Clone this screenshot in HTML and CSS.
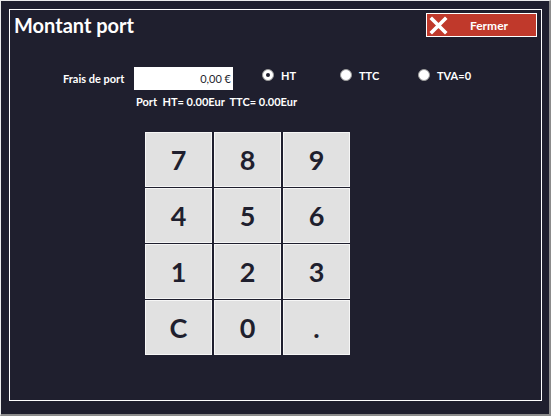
FILE: index.html
```html
<!DOCTYPE html>
<html lang="fr">
<head>
<meta charset="utf-8">
<title>Montant port</title>
<link rel="stylesheet" href="styles.css">
</head>
<body>
<div class="window">
  <div class="frame">
    <div class="header">
      <h1 class="title">Montant port</h1>
      <button class="close-btn" type="button">
        <svg class="close-icon" width="19" height="19" viewBox="0 0 19 19"><path d="M3 3 L16 16 M16 3 L3 16" stroke="#fff" stroke-width="3.6" stroke-linecap="square"/></svg>
        <span class="close-label">Fermer</span>
      </button>
    </div>
    <div class="form-row">
      <span class="label">Frais de port</span>
      <div class="input">0,00 €</div>
      <label class="radio"><span class="dot checked"></span>HT</label>
      <label class="radio"><span class="dot"></span>TTC</label>
      <label class="radio"><span class="dot"></span>TVA=0</label>
    </div>
    <div class="summary">Port&nbsp; HT= 0.00Eur&nbsp; TTC= 0.00Eur</div>
    <div class="keypad">
      <div class="key">7</div><div class="key">8</div><div class="key">9</div>
      <div class="key">4</div><div class="key">5</div><div class="key">6</div>
      <div class="key">1</div><div class="key">2</div><div class="key">3</div>
      <div class="key">C</div><div class="key">0</div><div class="key">.</div>
    </div>
  </div>
</div>
</body>
</html>
```
FILE: styles.css
```css
* { box-sizing: border-box; }
html, body { margin: 0; padding: 0; background: #1f1f2e; }
body { font-family: Lato, "Noto Sans", sans-serif; }

.window {
  width: 551px;
  height: 416px;
  background: #1f1f2e;
  border-top: 1px solid #ececec;
  border-left: 1px solid #ececec;
  border-right: 2px solid #8c8c8c;
  border-bottom: 2px solid #8c8c8c;
  padding: 8px 7px 0 8px;
}

.frame {
  width: 533px;
  height: 392px;
  border: 1px solid #ffffff;
  padding: 3px 4px 0 4px;
}

.header {
  display: flex;
  justify-content: space-between;
  align-items: flex-start;
  height: 24px;
}

.title {
  margin: 0;
  color: #ffffff;
  font-size: 20px;
  font-weight: 700;
  line-height: 24px;
}

.close-btn {
  width: 111px;
  height: 24px;
  background: #c0392b;
  border: 1px solid #ffffff;
  padding: 0 0 0 2px;
  display: flex;
  align-items: center;
  font-family: inherit;
  cursor: pointer;
}
.close-icon { flex: none; }
.close-label {
  flex: 1;
  text-align: center;
  color: #ffffff;
  font-size: 12px;
  font-weight: 700;
  padding-right: 6px;
}

.form-row {
  display: flex;
  align-items: center;
  margin-top: 30px;
  padding-left: 49px;
  height: 23px;
  color: #ffffff;
  font-size: 11px;
  font-weight: 700;
}
.label { width: 71px; }
.input {
  width: 99px;
  height: 23px;
  background: #ffffff;
  color: #1f1f2e;
  text-align: right;
  line-height: 23px;
  padding-right: 2px;
  font-weight: 400;
  margin-right: 29px;
  font-size: 11px;
}
.radio {
  display: flex;
  align-items: center;
  gap: 7px;
  margin-bottom: 7px;
}
.radio:nth-of-type(1) { width: 78px; }
.radio:nth-of-type(2) { width: 78px; }
.dot {
  width: 12px;
  height: 12px;
  border-radius: 50%;
  background: #ffffff;
  border: 1px solid #9a9a9a;
  display: flex;
  align-items: center;
  justify-content: center;
}
.dot.checked::after {
  content: "";
  width: 4px;
  height: 4px;
  border-radius: 50%;
  background: #1f1f2e;
}

.summary {
  color: #ffffff;
  font-size: 11px;
  font-weight: 700;
  margin-top: 5px;
  padding-left: 122px;
  line-height: 14px;
}

.keypad {
  display: grid;
  grid-template-columns: repeat(3, 67px);
  grid-template-rows: repeat(4, 55px);
  column-gap: 2px;
  row-gap: 1px;
  margin-top: 23px;
  margin-left: 131px;
  width: max-content;
}
.key {
  background: #e1e1e1;
  border: 1px solid #f6f6f6;
  color: #1f1f2e;
  font-size: 27px;
  font-weight: 700;
  display: flex;
  align-items: center;
  justify-content: center;
}
```
